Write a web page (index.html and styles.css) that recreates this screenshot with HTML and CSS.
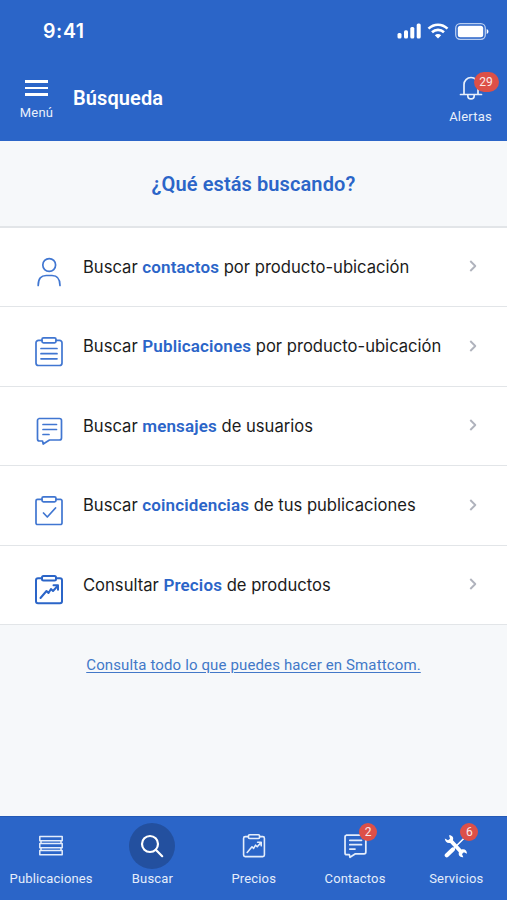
FILE: index.html
```html
<!DOCTYPE html>
<html lang="es">
<head>
<meta charset="utf-8">
<title>Búsqueda</title>
<link rel="stylesheet" href="styles.css">
</head>

<body>
<svg class="defs">
	<symbol id="i-user" viewBox="0 0 30 32"><circle cx="15.2" cy="9" r="6.4"/><path d="M4.200 29.500c0-7 3-10 8-10h5.800c5 0 8 3 8 10"/></symbol>
	<symbol id="i-list" viewBox="0 0 30 32"><path d="M8 4.300H4.500a2.500 2.500 0 0 0-2.500 2.500V27a2.500 2.500 0 0 0 2.500 2.500h21a2.500 2.500 0 0 0 2.500-2.500V6.800a2.500 2.500 0 0 0-2.500-2.500H22"/><rect x="8" y="1.800" width="14" height="5" rx="1.500"/><path d="M7 12.500h16M7 17.700h16M7 22.800h16"/></symbol>
	<symbol id="i-chat" viewBox="0 0 30 32"><path d="M5 3.500h20.500a2 2 0 0 1 2 2V23a2 2 0 0 1-2 2H15.500l-6.300 4L8.500 26H5.500a2 2 0 0 1-2-2V5.500a2 2 0 0 1 2-2z"/><path d="M9 9.500h13.500M9 14.500h13.500M9 19.500h6"/></symbol>
	<symbol id="i-check" viewBox="0 0 30 32"><path d="M8 4.300H3.500A1.500 1.500 0 0 0 2 5.800V28a1.500 1.500 0 0 0 1.500 1.500h23A1.500 1.500 0 0 0 28 28V5.800a1.500 1.500 0 0 0-1.500-1.500H22"/><rect x="8" y="1.800" width="14" height="5" rx="1.500"/><path d="M9.500 18l3.800 4L21.500 13"/></symbol>
	<symbol id="i-price" viewBox="0 0 30 32"><path d="M8 4.300H4A2 2 0 0 0 2 6.300v21a2 2 0 0 0 2 2h22a2 2 0 0 0 2-2v-21a2 2 0 0 0-2-2h-4"/><rect x="8" y="2" width="14" height="4.600" rx="1.500"/><path d="M6.500 24l6-7 2 2 2.500-4 2 2 5-5.500M19.500 11.300h4.500v4.500"/></symbol>
	<symbol id="i-arrow" viewBox="0 0 8 12"><path d="M1.300 1l5 5-5 5"/></symbol>
</svg>

<div class="app">
	<div class="header">
		<div class="status">
			<span class="time">9:41</span>
			<div class="status-icons">
				<svg width="25" height="16" viewBox="0 0 25 16"><rect x="0.500" y="10" width="4" height="5.500" rx="1.500"/><rect x="7" y="7.300" width="4" height="8.200" rx="1.500"/><rect x="13.300" y="4" width="4" height="11.500" rx="1.500"/><rect x="19.700" y="0.500" width="4" height="15" rx="1.500"/></svg>
				<svg class="wifi" width="22" height="16" viewBox="0 0 22 16"><path d="M1.500 5.600c5.400-5.200 13.600-5.200 19 0M5 9.300c3.400-3.200 8.600-3.200 12 0"/><path class="dot" d="M7.800 12.300c1.800-1.700 4.600-1.700 6.400 0L11 15.600z"/></svg>
				<svg class="battery" width="34" height="17" viewBox="0 0 34 17"><rect class="case" x="0.700" y="0.700" width="29.600" height="15.600" rx="4.500"/><rect x="2.800" y="2.700" width="25.400" height="11.600" rx="2.500"/><path d="M31.700 6c2.300.7 2.300 4.300 0 5z"/></svg>
			</div>
		</div>
		<div class="nav">
			<div class="menu">
				<div class="bars"><i></i><i></i><i></i></div>
				<span>Menú</span>
			</div>
			<h1>Búsqueda</h1>
			<div class="alerts">
				<div class="icon">
					<svg width="24" height="26" viewBox="0 0 24 26"><path d="M1.500 18.500h21M5 18.500V8.500a7 7 0 0 1 14 0v10M8.800 19.500c0 4.600 6.400 4.600 6.400 0"/></svg>
					<b class="badge wide">29</b>
				</div>
				<span>Alertas</span>
			</div>
		</div>
	</div>

	<h2>¿Qué estás buscando?</h2>

	<ul class="list">
		<li><svg class="ico"><use href="#i-user"/></svg><p>Buscar <b>contactos</b> por producto-ubicación</p><svg class="arrow"><use href="#i-arrow"/></svg></li>
		<li><svg class="ico"><use href="#i-list"/></svg><p>Buscar <b>Publicaciones</b> por producto-ubicación</p><svg class="arrow"><use href="#i-arrow"/></svg></li>
		<li><svg class="ico"><use href="#i-chat"/></svg><p>Buscar <b>mensajes</b> de usuarios</p><svg class="arrow"><use href="#i-arrow"/></svg></li>
		<li><svg class="ico"><use href="#i-check"/></svg><p>Buscar <b>coincidencias</b> de tus publicaciones</p><svg class="arrow"><use href="#i-arrow"/></svg></li>
		<li><svg class="ico bold"><use href="#i-price"/></svg><p>Consultar <b>Precios</b> de productos</p><svg class="arrow"><use href="#i-arrow"/></svg></li>
	</ul>

	<div class="more"><a href="#">Consulta todo lo que puedes hacer en Smattcom.</a></div>

	<div class="tabs">
		<div class="tab">
			<div class="icon"><svg width="26" height="22" viewBox="0 0 26 22"><path class="thin" d="M1.800 1.500h22.400v4.300H1.800zM1.800 8.500h22.400v4.300H1.800zM1.800 15.500h22.400v4.300H1.800zM3 5.800v2.700M23 5.800v2.700M3 12.800v2.700M23 12.800v2.700"/></svg></div>
			<span>Publicaciones</span>
		</div>
		<div class="tab active">
			<div class="icon"><svg width="24" height="24" viewBox="0 0 24 24"><circle cx="10" cy="10" r="8"/><path d="M15.800 15.800l6.400 6.400"/></svg></div>
			<span>Buscar</span>
		</div>
		<div class="tab">
			<div class="icon"><svg width="24" height="26"><use href="#i-price"/></svg></div>
			<span>Precios</span>
		</div>
		<div class="tab">
			<div class="icon"><svg width="26" height="28"><use href="#i-chat"/></svg><b class="badge">2</b></div>
			<span>Contactos</span>
		</div>
		<div class="tab">
			<div class="icon"><svg class="tools" width="24" height="24" viewBox="0 0 24 24"><path class="fill" d="M.8 4.500l3.200 1.700 2-1.500L5 1.200c3.300-.2 5 2.300 3.900 5l8.600 9.300c3.300-.9 5.700 1.100 5.400 4.300l-3-1.500-1.900 1.700 1.300 3.200c-3.200.5-5.300-1.900-4.400-4.900L6.200 8.900C3.200 9.600.9 7.500.8 4.500z"/><path class="handle" d="M2.800 21.200l6-5.700"/><path class="rod" d="M10 14.300L21 3.200"/></svg><b class="badge">6</b></div>
			<span>Servicios</span>
		</div>
	</div>
</div>
</body>
</html>
```
FILE: styles.css
```css
*{margin:0; padding:0; list-style:none; box-sizing:border-box;}
body{font-family:Roboto, "Liberation Sans", sans-serif; background:#f6f8fa;}
svg{display:block; fill:none; stroke:currentColor; stroke-linecap:round; stroke-linejoin:round;}
.defs{display:none;}
.app{display:flex; flex-direction:column; width:507px; height:900px; overflow:hidden;}

.header{height:141px; background:#2b65c8; color:#fff;}
.status{display:flex; justify-content:space-between; height:62px; padding:20px 18px 0 43px;}
.time{font:600 19.500px/22px Inter, sans-serif; letter-spacing:.6px;}
.status-icons{display:flex; gap:6px; padding-top:3px;}
.status-icons svg{fill:#fff; stroke:none;}
.status-icons .wifi{fill:none; stroke:#fff; stroke-width:2.600; stroke-linecap:butt; margin-left:-1px;}
.status-icons .dot{fill:#fff; stroke:none;}
.status-icons .case{fill:none; stroke:#b8cdf0; stroke-width:1.300;}
.nav{display:flex; color:#e9f0fb;}
.menu{width:73px; padding-top:18px; text-align:center; font-size:13px; line-height:16px; letter-spacing:.2px;}
.bars{display:flex; flex-direction:column; gap:4px; width:23px; margin:0 auto 9px;}
.bars i{height:2.600px; background:#fff;}
.nav h1{flex:1; padding-top:23px; font-size:20px; line-height:26px; font-weight:600; color:#fff; letter-spacing:.1px;}
.alerts{width:73px; padding-top:14px; text-align:center; font-size:13px; line-height:16px; letter-spacing:.2px;}
.alerts .icon{height:33px;}
.alerts svg{stroke-width:1.700;}

.icon{position:relative; display:flex; justify-content:center;}
.badge{position:absolute; left:50%; top:0; width:18px; height:18px; margin-left:4px; border-radius:10px; background:#dd5048; color:#fbe9e8; font-size:12px; line-height:18px; font-weight:400; text-align:center; letter-spacing:0;}
.badge.wide{width:25px; height:20px; top:-4px; margin-left:3px; line-height:20px;}

h2{height:86.500px; padding-top:29px; border-bottom:2px solid #e2e5e8; color:#2b65c8; font-size:20px; line-height:28px; font-weight:600; text-align:center; letter-spacing:.1px;}

.list li{display:flex; height:79.600px; padding:0 30px 0 34px; border-bottom:1.600px solid #e2e5e8; background:#fff;}
.list p{flex:1; padding:27px 0 0 19px; font:16.600px/24px Inter, sans-serif; color:#1c1c1c; white-space:nowrap;}
.list b{color:#2b65c8; font:600 17px/20px Roboto, sans-serif; letter-spacing:.13px;}
.ico{width:30px; height:32px; margin-top:28.500px; color:#4076d1; stroke-width:1.700;}
.ico.bold{stroke-width:2; color:#2b65c8;}
.arrow{width:8px; height:12px; margin-top:32.500px; color:#b0b3bd; stroke-width:1.900; stroke-linecap:butt;}

.more{flex:1; padding-top:28.500px; text-align:center; font-size:15px; line-height:22px; letter-spacing:.13px;}
.more a{color:#4278c8; text-underline-offset:2px;}

.tabs{display:flex; height:84px; padding-left:.500px; background:#2b65c8; border-top:1px solid #2459b5; color:#e4edfb;}
.tab{width:101.400px; padding-top:6px; text-align:center; font-size:13px; line-height:16px; letter-spacing:.17px;}
.tab .icon{align-items:center; width:46px; height:46px; margin:0 auto 2px; border-radius:50%;}
.tab svg{stroke-width:2;}
.tab .thin{stroke-width:1.500;}
.tab.active .icon{background:#23509f;}
.tab.active svg{color:#fff; stroke-width:2.200;}
.tab .fill{fill:#fff; stroke:none;}
.tab .handle{stroke:#fff; stroke-width:4.200;}
.tab .rod{stroke:#fff; stroke-width:1.500;}
```
